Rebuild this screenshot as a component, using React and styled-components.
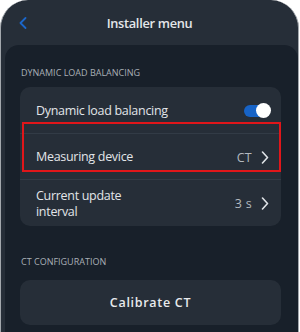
import React from "react";
import styled, { createGlobalStyle } from "styled-components";

const Global = createGlobalStyle`
  html, body { margin: 0; padding: 0; background: #ffffff; }
  body { font-family: "Open Sans", "Noto Sans", sans-serif; }
`;

const Frame = styled.div`
  position: relative;
  width: 299px;
  height: 332px;
  box-sizing: border-box;
  border-left: 1px solid #a3a8ad;
  border-right: 1px solid #a3a8ad;
  border-radius: 28px 28px 0 0;
  background: #262e38;
  overflow: hidden;
  display: flex;
  flex-direction: column;
`;

const Header = styled.div`
  height: 45px;
  flex: none;
  display: grid;
  grid-template-columns: 40px 1fr 40px;
  align-items: center;
`;

const Back = styled.div`
  display: flex;
  align-items: center;
  padding-left: 18px;
  padding-top: 1px;
`;

const Title = styled.div`
  text-align: center;
  color: #e4e7ea;
  font-size: 12.8px;
  font-weight: 600;
  letter-spacing: -0.3px;
  padding-top: 1px;
`;

const Panel = styled.div`
  flex: 1;
  margin-left: 4px;
  background: #18202a;
  border-radius: 14px 14px 0 0;
  padding: 21px 17px 0 15px;
  display: flex;
  flex-direction: column;
`;

const SectionLabel = styled.div`
  color: #a9afb6;
  font-size: 9px;
  line-height: 14px;
  padding-left: 1px;
  text-transform: uppercase;
  margin-top: ${(p) => p.$top || 0}px;
  margin-bottom: ${(p) => p.$bottom || 0}px;
`;

const Card = styled.div`
  background: #262e38;
  border-radius: 10px;
  display: flex;
  flex-direction: column;
`;

const Row = styled.div`
  height: ${(p) => p.$h}px;
  box-sizing: border-box;
  display: flex;
  align-items: center;
  padding: 1px 12px 0 16px;
  border-top: ${(p) => (p.$divider ? "1px solid #323b46" : "none")};
`;

const RowLabel = styled.div`
  flex: 1;
  color: #e2e5e8;
  font-size: 12.5px;
  letter-spacing: -0.3px;
  line-height: 16px;
`;

const RowValue = styled.div`
  color: #b3b9bf;
  font-size: 12.5px;
  letter-spacing: 0.3px;
  margin-right: 9px;
`;

const Toggle = styled.div`
  position: relative;
  width: 26px;
  height: 12px;
  border-radius: 6px;
  background: #1763c6;
  margin-right: -1px;
`;

const Knob = styled.div`
  position: absolute;
  right: -1px;
  top: -2px;
  width: 15px;
  height: 15px;
  border-radius: 50%;
  background: #ffffff;
`;

const Button = styled.div`
  height: 45px;
  background: #262e38;
  border-radius: 10px;
  display: flex;
  align-items: center;
  justify-content: center;
  color: #e8eaec;
  font-size: 12.5px;
  font-weight: 600;
  letter-spacing: 0.7px;
`;

const Highlight = styled.div`
  position: absolute;
  left: 21px;
  top: 122px;
  width: 259px;
  height: 50px;
  box-sizing: border-box;
  border: 2px solid #e0161a;
  pointer-events: none;
`;

const Chevron = ({ color = "#dfe3e7" }) => (
  <svg width="8" height="13" viewBox="0 0 8 13" fill="none">
    <path d="M1.5 1L6.5 6.5L1.5 12" stroke={color} strokeWidth="1.6" strokeLinecap="round" strokeLinejoin="round" />
  </svg>
);

const BackChevron = () => (
  <svg width="8" height="12" viewBox="0 0 8 12" fill="none">
    <path d="M6.5 1L1.5 6L6.5 11" stroke="#1b66c9" strokeWidth="1.8" strokeLinecap="round" strokeLinejoin="round" />
  </svg>
);

export default function App() {
  return (
    <>
      <Global />
      <Frame>
        <Header>
          <Back>
            <BackChevron />
          </Back>
          <Title>Installer menu</Title>
          <div />
        </Header>
        <Panel>
          <SectionLabel $bottom={7}>Dynamic load balancing</SectionLabel>
          <Card>
            <Row $h={46}>
              <RowLabel>Dynamic load balancing</RowLabel>
              <Toggle>
                <Knob />
              </Toggle>
            </Row>
            <Row $h={46} $divider>
              <RowLabel>Measuring device</RowLabel>
              <RowValue>CT</RowValue>
              <Chevron />
            </Row>
            <Row $h={47} $divider>
              <RowLabel>
                Current update
                <br />
                interval
              </RowLabel>
              <RowValue>3 s</RowValue>
              <Chevron />
            </Row>
          </Card>
          <SectionLabel $top={29} $bottom={11}>CT configuration</SectionLabel>
          <Button>Calibrate CT</Button>
        </Panel>
        <Highlight />
      </Frame>
    </>
  );
}
